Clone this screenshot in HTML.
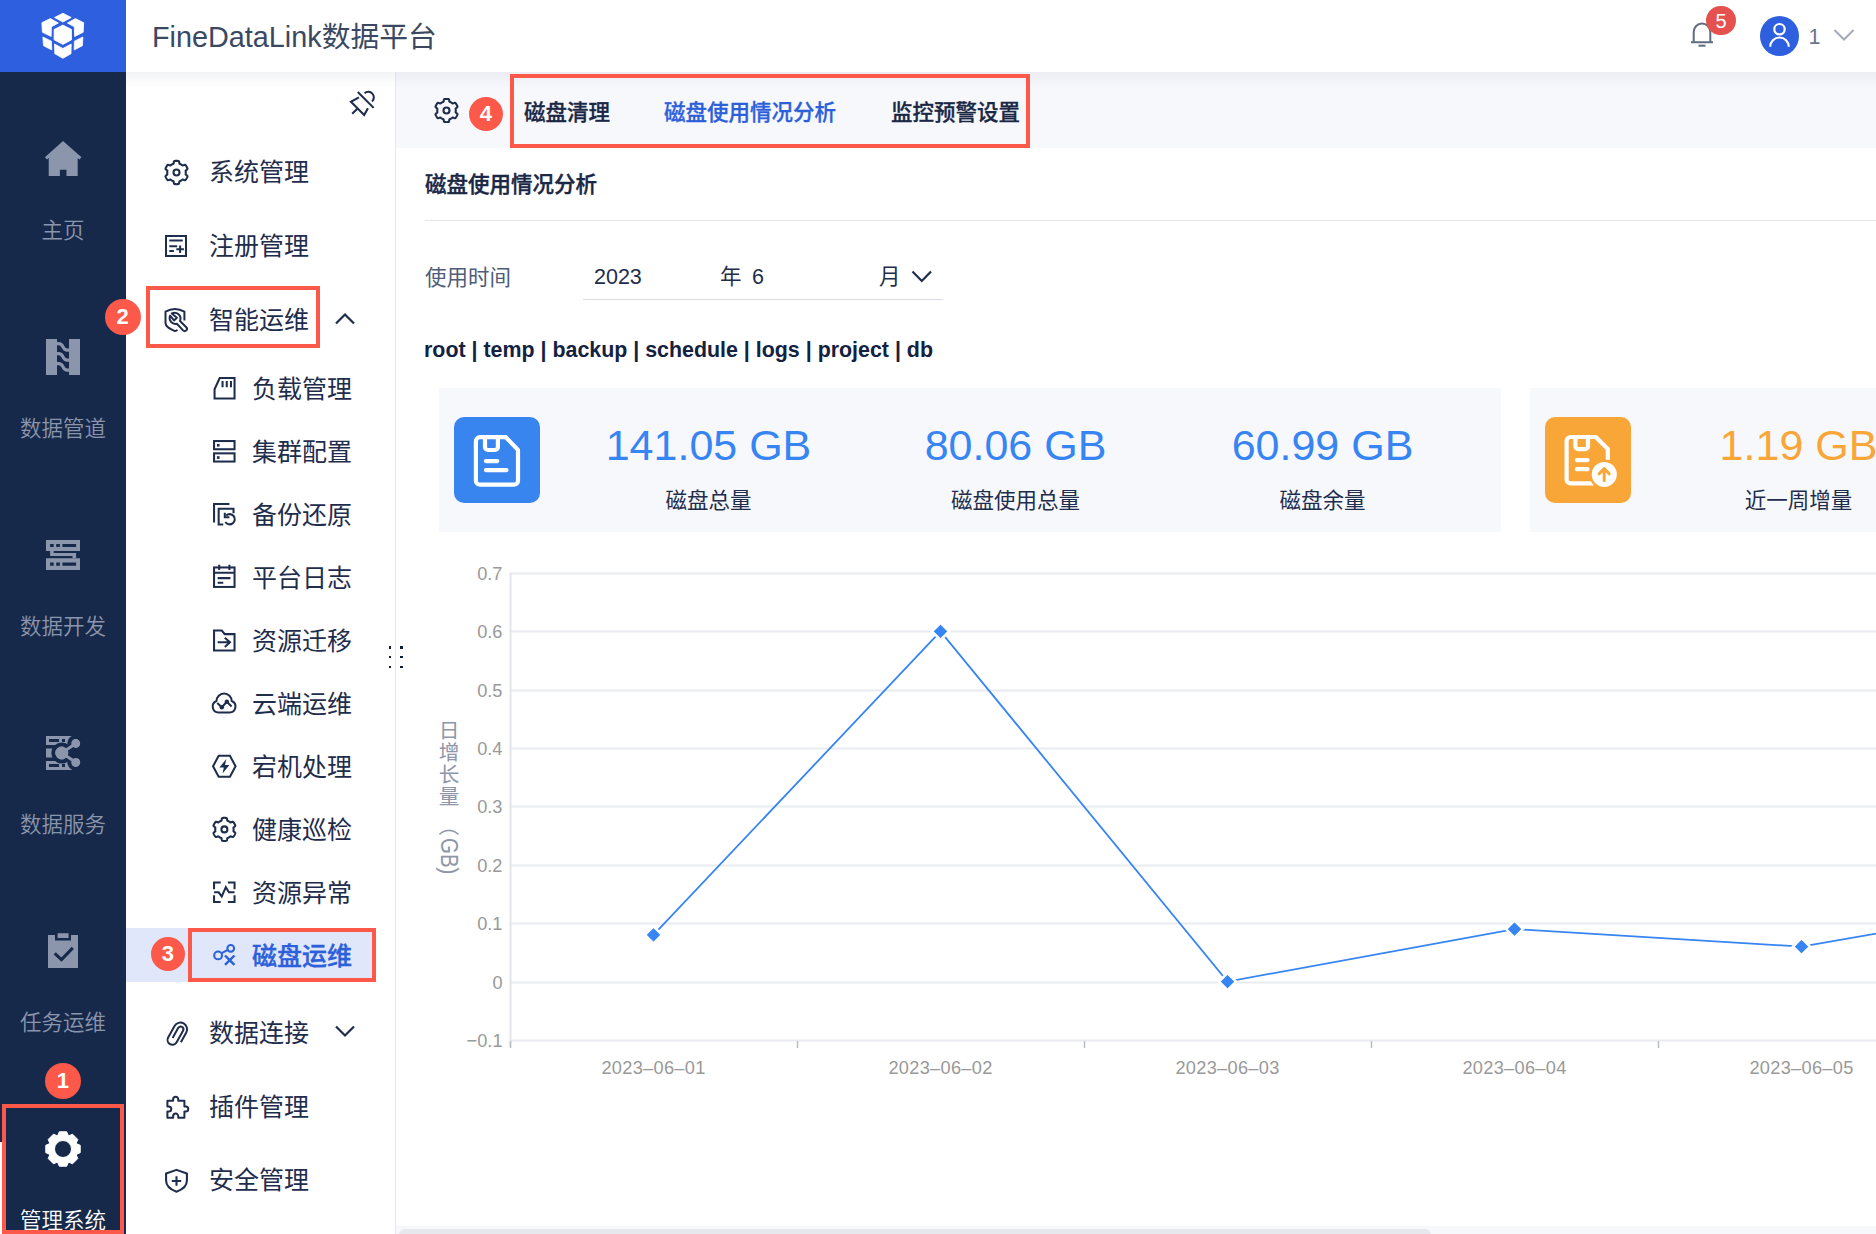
<!DOCTYPE html>
<html lang="zh-CN">
<head>
<meta charset="utf-8">
<title>FineDataLink数据平台</title>
<style>
*{box-sizing:border-box;margin:0;padding:0}
html,body{width:1876px;height:1234px;overflow:hidden;background:#fff}
body{position:relative;font-family:"Liberation Sans","Noto Sans CJK SC",sans-serif;color:#1f2d4d}
.abs{position:absolute}
#nav{left:0;top:0;width:126px;height:1234px;background:#16294b}
#logo{left:0;top:0;width:126px;height:72px;background:#2d5fde}
#header{left:126px;top:0;width:1750px;height:72px;background:#fff}
#title{left:152px;top:1px;height:72px;line-height:72px;font-size:28.8px;color:#3a4961;white-space:nowrap}
#hshadow{left:126px;top:72px;width:1750px;height:16px;background:linear-gradient(to bottom,rgba(30,45,80,.055),rgba(30,45,80,0))}
#side{left:126px;top:72px;width:270px;height:1162px;background:#fff;border-right:1px solid #e6e8ef}
#tabbar{left:396px;top:72px;width:1480px;height:76px;background:#f7f8fc}
.navlab{left:0;width:126px;text-align:center;font-size:21.5px;font-weight:350;color:#8f98ad;height:30px;line-height:30px;white-space:nowrap}
.m1{font-size:25px;height:36px;line-height:36px;white-space:nowrap;color:#1f2d4d}
.tab{font-size:21.5px;line-height:36px;font-weight:500;color:#1a2745;white-space:nowrap;-webkit-text-stroke:.3px currentColor}
.frm{top:259px;font-size:21.5px;line-height:36px;color:#1f2d4d;white-space:nowrap}
.val{top:420px;width:307px;text-align:center;font-size:43px;line-height:50px;color:#3685f2;white-space:nowrap}
.vlab{top:483px;width:307px;text-align:center;font-size:21.5px;line-height:36px;color:#1f2d4d;white-space:nowrap}
.redbox{border:4px solid #fc594a}
.badge{width:34px;height:34px;border-radius:50%;background:#fc594a;color:#fff;font-size:22px;font-weight:bold;text-align:center;line-height:34px}
</style>
</head>
<body>
<div id="nav" class="abs"></div>
<div id="logo" class="abs"></div>
<div id="header" class="abs"></div>
<div id="title" class="abs">FineDataLink数据平台</div>
<div id="side" class="abs"></div>
<div id="tabbar" class="abs"></div>
<div id="hshadow" class="abs"></div>
<svg class="abs" style="left:40px;top:12px" width="46" height="48" viewBox="0 0 46 48"><g fill="#fff" stroke="#fff" stroke-width="0.8" stroke-linejoin="round">
<path d="M22.9 1.2L31.2 5.5 22.9 10 14.6 5.5Z"/>
<path d="M10.3 6.6L18.4 11 11.4 14.8 11.2 24.5 2.4 20.2 1.9 10.7Z"/>
<path d="M35.4 6.6L43.7 10.7 43.2 20.2 34.6 24.5 34.4 14.8 27.4 11Z"/>
<path d="M22.9 13.1L31.5 17.5 31.5 27.8 22.9 32.4 14.1 27.8 14.1 17.5Z"/>
<path d="M2.9 25L11.4 29.2 11.8 37.9 3.5 33.7Z"/>
<path d="M42.9 25L42.4 33.7 34.2 37.9 34.4 29.2Z"/>
<path d="M14.5 32L22.9 36.5 31.2 32 31 41.7 22.9 46.3 14.8 41.7Z"/>
</g></svg>
<svg class="abs" style="left:44px;top:140px" width="38" height="37" viewBox="0 0 38 37"><path fill="#8b95ab" d="M19 1 L37.5 17.3 35.4 19.5 33.7 18 33.7 36 22.5 36 22.5 29.7 15.9 29.7 15.9 36 4.7 36 4.7 18 3 19.5 0.9 17.3Z"/></svg>
<svg class="abs" style="left:45px;top:338px" width="36" height="38" viewBox="0 0 36 38"><g fill="#8b95ab"><rect x="1" y="1" width="11" height="36"/><rect x="24" y="1" width="11" height="36"/></g><g fill="none" stroke="#8b95ab" stroke-width="3.2"><path d="M12 5.7H13.5C19.5 5.7 16.5 12.2 22.5 12.2H24"/><path d="M12 15.7H13.5C19.5 15.7 16.5 22.2 22.5 22.2H24"/><path d="M12 25.7H13.5C19.5 25.7 16.5 32.2 22.5 32.2H24"/></g></svg>
<svg class="abs" style="left:45px;top:539px" width="36" height="32" viewBox="0 0 36 32"><g fill="#8b95ab" fill-rule="evenodd"><path d="M1 1H35V12H1Z M5.1 5H8.7V8H5.1Z M11.2 5H14.9V8H11.2Z M17.4 5H31.1V8H17.4Z"/><path d="M1 19.2H35V31H1Z M5.1 23.4H8.7V26.7H5.1Z M11.2 23.4H14.9V26.7H11.2Z M17.4 23.4H31.1V26.7H17.4Z"/><path d="M5.1 12H8.7V14H31.1V19.2H27.5V17H5.1Z"/></g></svg>
<svg class="abs" style="left:45px;top:735px" width="38" height="36" viewBox="0 0 38 36"><g fill="#8b95ab" fill-rule="evenodd"><path d="M1 1H29V10H1Z M4 4H14V7H4Z M17 4H20V7H17Z"/><rect x="1" y="13.5" width="7" height="9"/><path d="M1 26H29V35H1Z M4 29H14V32H4Z M17 29H20V32H17Z"/></g>
<g stroke="#16294b" stroke-width="4" fill="#8b95ab"><circle cx="16.8" cy="18" r="8.5"/><circle cx="30.7" cy="8.5" r="6.4"/><circle cx="30.7" cy="27.3" r="6.4"/><path d="M16.8 18L30.7 8.5M16.8 18L30.7 27.3" stroke-width="7"/></g>
<g fill="#8b95ab" stroke="#8b95ab"><circle cx="16.8" cy="18" r="6.5" stroke="none"/><circle cx="30.7" cy="8.5" r="4.4" stroke="none"/><circle cx="30.7" cy="27.3" r="4.4" stroke="none"/><path d="M16.8 18L30.7 8.5M16.8 18L30.7 27.3" stroke-width="3"/></g></svg>
<svg class="abs" style="left:47px;top:932px" width="32" height="37" viewBox="0 0 32 37"><path fill="#8b95ab" fill-rule="evenodd" d="M1 3H8V8.5H24V3H31V36H1Z M10.6 1.3H21.6V5.9H10.6Z"/><path d="M7.7 21.4L14.5 27.6 25.8 15.9" fill="none" stroke="#16294b" stroke-width="3"/></svg>
<svg class="abs" style="left:43px;top:1129px" width="40" height="40" viewBox="0 0 40 40"><path fill="#fff" fill-rule="evenodd" d="M25.14 6.23 L23.7 2.79 L16.3 2.79 L14.86 6.23 L13.9 6.63 L10.45 5.21 L5.21 10.45 L6.63 13.9 L6.23 14.86 L2.79 16.3 L2.79 23.7 L6.23 25.14 L6.63 26.1 L5.21 29.55 L10.45 34.79 L13.9 33.37 L14.86 33.77 L16.3 37.21 L23.7 37.21 L25.14 33.77 L26.1 33.37 L29.55 34.79 L34.79 29.55 L33.37 26.1 L33.77 25.14 L37.21 23.7 L37.21 16.3 L33.77 14.86 L33.37 13.9 L34.79 10.45 L29.55 5.21 L26.1 6.63Z M28.5 20 A8.5 8.5 0 1 0 11.5 20 A8.5 8.5 0 1 0 28.5 20Z" stroke="#fff" stroke-width="1" stroke-linejoin="round"/></svg>
<div class="abs navlab" style="top:216px;color:#8b95ab">主页</div>
<div class="abs navlab" style="top:414px;color:#8b95ab">数据管道</div>
<div class="abs navlab" style="top:612px;color:#8b95ab">数据开发</div>
<div class="abs navlab" style="top:810px;color:#8b95ab">数据服务</div>
<div class="abs navlab" style="top:1008px;color:#8b95ab">任务运维</div>
<div class="abs navlab" style="top:1206px;color:#fff">管理系统</div>
<div class="abs" style="left:0;top:1142px;width:2px;height:92px;background:#fff"></div>
<div class="abs" style="left:126px;top:928px;width:250px;height:54px;background:#e0e7fa"></div>
<svg class="abs" style="left:163.7px;top:159.5px;color:#1f2d4d;" width="25" height="25" viewBox="0 0 24 24" overflow="visible"><path d="M20.9 12 L20.9 11.77 L20.89 11.53 L20.87 11.3 L20.85 11.07 L20.82 10.84 L20.79 10.61 L20.75 10.38 L20.84 10.12 L21.19 9.79 L21.71 9.4 L22.21 8.98 L22.52 8.58 L22.56 8.26 L22.46 7.99 L22.35 7.71 L22.23 7.44 L22.11 7.18 L21.98 6.92 L21.84 6.66 L21.7 6.4 L21.55 6.15 L21.39 5.9 L21.23 5.66 L21.06 5.42 L20.89 5.18 L20.7 4.95 L20.52 4.73 L20.22 4.6 L19.72 4.67 L19.11 4.89 L18.51 5.14 L18.05 5.28 L17.78 5.23 L17.6 5.08 L17.42 4.94 L17.23 4.8 L17.04 4.67 L16.85 4.54 L16.65 4.41 L16.45 4.29 L16.25 4.18 L16.04 4.07 L15.83 3.97 L15.62 3.87 L15.41 3.78 L15.19 3.69 L14.97 3.61 L14.79 3.41 L14.68 2.94 L14.6 2.29 L14.49 1.65 L14.3 1.18 L14.04 0.99 L13.75 0.94 L13.46 0.9 L13.17 0.86 L12.88 0.83 L12.59 0.82 L12.29 0.8 L12 0.8 L11.71 0.8 L11.41 0.82 L11.12 0.83 L10.83 0.86 L10.54 0.9 L10.25 0.94 L9.96 0.99 L9.7 1.18 L9.51 1.65 L9.4 2.29 L9.32 2.94 L9.21 3.41 L9.03 3.61 L8.81 3.69 L8.59 3.78 L8.38 3.87 L8.17 3.97 L7.96 4.07 L7.75 4.18 L7.55 4.29 L7.35 4.41 L7.15 4.54 L6.96 4.67 L6.77 4.8 L6.58 4.94 L6.4 5.08 L6.22 5.23 L5.95 5.28 L5.49 5.14 L4.89 4.89 L4.28 4.67 L3.78 4.6 L3.48 4.73 L3.3 4.95 L3.11 5.18 L2.94 5.42 L2.77 5.66 L2.61 5.9 L2.45 6.15 L2.3 6.4 L2.16 6.66 L2.02 6.92 L1.89 7.18 L1.77 7.44 L1.65 7.71 L1.54 7.99 L1.44 8.26 L1.48 8.58 L1.79 8.98 L2.29 9.4 L2.81 9.79 L3.16 10.12 L3.25 10.38 L3.21 10.61 L3.18 10.84 L3.15 11.07 L3.13 11.3 L3.11 11.53 L3.1 11.77 L3.1 12 L3.1 12.23 L3.11 12.47 L3.13 12.7 L3.15 12.93 L3.18 13.16 L3.21 13.39 L3.25 13.62 L3.16 13.88 L2.81 14.21 L2.29 14.6 L1.79 15.02 L1.48 15.42 L1.44 15.74 L1.54 16.01 L1.65 16.29 L1.77 16.56 L1.89 16.82 L2.02 17.08 L2.16 17.34 L2.3 17.6 L2.45 17.85 L2.61 18.1 L2.77 18.34 L2.94 18.58 L3.11 18.82 L3.3 19.05 L3.48 19.27 L3.78 19.4 L4.28 19.33 L4.89 19.11 L5.49 18.86 L5.95 18.72 L6.22 18.77 L6.4 18.92 L6.58 19.06 L6.77 19.2 L6.96 19.33 L7.15 19.46 L7.35 19.59 L7.55 19.71 L7.75 19.82 L7.96 19.93 L8.17 20.03 L8.38 20.13 L8.59 20.22 L8.81 20.31 L9.03 20.39 L9.21 20.59 L9.32 21.06 L9.4 21.71 L9.51 22.35 L9.7 22.82 L9.96 23.01 L10.25 23.06 L10.54 23.1 L10.83 23.14 L11.12 23.17 L11.41 23.18 L11.71 23.2 L12 23.2 L12.29 23.2 L12.59 23.18 L12.88 23.17 L13.17 23.14 L13.46 23.1 L13.75 23.06 L14.04 23.01 L14.3 22.82 L14.49 22.35 L14.6 21.71 L14.68 21.06 L14.79 20.59 L14.97 20.39 L15.19 20.31 L15.41 20.22 L15.62 20.13 L15.83 20.03 L16.04 19.93 L16.25 19.82 L16.45 19.71 L16.65 19.59 L16.85 19.46 L17.04 19.33 L17.23 19.2 L17.42 19.06 L17.6 18.92 L17.78 18.77 L18.05 18.72 L18.51 18.86 L19.11 19.11 L19.72 19.33 L20.22 19.4 L20.52 19.27 L20.7 19.05 L20.89 18.82 L21.06 18.58 L21.23 18.34 L21.39 18.1 L21.55 17.85 L21.7 17.6 L21.84 17.34 L21.98 17.08 L22.11 16.82 L22.23 16.56 L22.35 16.29 L22.46 16.01 L22.56 15.74 L22.52 15.42 L22.21 15.02 L21.71 14.6 L21.19 14.21 L20.84 13.88 L20.75 13.62 L20.79 13.39 L20.82 13.16 L20.85 12.93 L20.87 12.7 L20.89 12.47 L20.9 12.23Z" fill="none" stroke="currentColor" stroke-width="2" stroke-linejoin="round"/><circle cx="12" cy="12" r="2.9" fill="none" stroke="currentColor" stroke-width="2"/></svg>
<div class="abs m1" style="left:209px;top:154px">系统管理</div>
<svg class="abs" style="left:164.2px;top:234px;color:#1f2d4d;" width="24" height="24" viewBox="0 0 24 24" overflow="visible"><rect x="2" y="2" width="20" height="20" fill="none" stroke="currentColor" stroke-width="2"/><path d="M5.3 6.6H18.8M5.3 12.3H13.2M5.3 16.9H9.9M12.3 15.2H19.9M16.1 11.4V19" fill="none" stroke="currentColor" stroke-width="2"/></svg>
<div class="abs m1" style="left:209px;top:228px">注册管理</div>
<svg class="abs" style="left:164.2px;top:308px;color:#1f2d4d;" width="24" height="24" viewBox="0 0 24 24" overflow="visible"><path d="M20.4 12.6V3.6Q10.9 -1.7 1.5 3.6V15C1.5 19 6 21 10.9 23.1Q12.6 22.9 13.3 21.6" fill="none" stroke="currentColor" stroke-width="2" stroke-linejoin="round"/><path d="M7.8 5.5A5.9 5.9 0 0 1 16 13L22.3 19.2A2.25 2.25 0 0 1 19.1 22.4L12.9 15.7A5.9 5.9 0 0 1 6.1 7.7L10 12.4 12.9 9.7Z" fill="none" stroke="currentColor" stroke-width="2" stroke-linejoin="round"/></svg>
<div class="abs m1" style="left:209px;top:302px">智能运维</div>
<svg class="abs" style="left:212.3px;top:376.2px;color:#1f2d4d;" width="24.6" height="24.6" viewBox="0 0 24 24" overflow="visible"><path d="M7.5 2H22V22H2.5V13Z" fill="none" stroke="currentColor" stroke-width="2" stroke-linejoin="miter"/><path d="M10.3 5V11M14.4 5V11M18.5 5V11" fill="none" stroke="currentColor" stroke-width="2"/></svg>
<div class="abs m1" style="left:252px;top:371px;color:#1f2d4d;">负载管理</div>
<svg class="abs" style="left:212.3px;top:439.2px;color:#1f2d4d;" width="24.6" height="24.6" viewBox="0 0 24 24" overflow="visible"><rect x="2" y="2" width="20" height="8" fill="none" stroke="currentColor" stroke-width="2"/><rect x="2" y="14" width="20" height="8" fill="none" stroke="currentColor" stroke-width="2"/><rect x="4.8" y="4.8" width="2.6" height="2.6" fill="currentColor"/><rect x="4.8" y="16.8" width="2.6" height="2.6" fill="currentColor"/></svg>
<div class="abs m1" style="left:252px;top:434px;color:#1f2d4d;">集群配置</div>
<svg class="abs" style="left:212.3px;top:502.2px;color:#1f2d4d;" width="24.6" height="24.6" viewBox="0 0 24 24" overflow="visible"><path d="M2 20V2H17" fill="none" stroke="currentColor" stroke-width="2"/><path d="M11 22H6.5V6.5H21V11" fill="none" stroke="currentColor" stroke-width="2"/><path d="M13.8 13.2A5 5 0 1 1 13 19.5" fill="none" stroke="currentColor" stroke-width="2"/><path d="M12.5 10.5V14.8H17" fill="none" stroke="currentColor" stroke-width="2"/></svg>
<div class="abs m1" style="left:252px;top:497px;color:#1f2d4d;">备份还原</div>
<svg class="abs" style="left:212.3px;top:565.2px;color:#1f2d4d;" width="24.6" height="24.6" viewBox="0 0 24 24" overflow="visible"><rect x="2" y="2.4" width="20" height="19" fill="none" stroke="currentColor" stroke-width="2"/><path d="M2 7.6H22M7 -0.2V5M17 -0.2V5M5.5 12.8H18M5.5 17.3H11" fill="none" stroke="currentColor" stroke-width="2"/></svg>
<div class="abs m1" style="left:252px;top:560px;color:#1f2d4d;">平台日志</div>
<svg class="abs" style="left:212.3px;top:628.2px;color:#1f2d4d;" width="24.6" height="24.6" viewBox="0 0 24 24" overflow="visible"><path d="M2 2.5H9.5L12.5 6H22V22H2Z" fill="none" stroke="currentColor" stroke-width="2" stroke-linejoin="miter"/><path d="M5.5 14H17M12.5 9.5L17.5 14L12.5 18.5" fill="none" stroke="currentColor" stroke-width="2"/></svg>
<div class="abs m1" style="left:252px;top:623px;color:#1f2d4d;">资源迁移</div>
<svg class="abs" style="left:212.3px;top:691.2px;color:#1f2d4d;" width="24.6" height="24.6" viewBox="0 0 24 24" overflow="visible"><path d="M6.4 21H17.2A5.8 5.8 0 0 0 19.2 9.8A7.4 7.4 0 0 0 4.4 9.8A5.8 5.8 0 0 0 6.4 21Z" fill="none" stroke="currentColor" stroke-width="2" stroke-linejoin="round"/><path d="M5.1 11.6L9.6 15.9 14.5 10.5 19.1 15.2" fill="none" stroke="currentColor" stroke-width="2"/><circle cx="9.6" cy="15.9" r="2.2" fill="currentColor"/><circle cx="14.5" cy="10.5" r="2.2" fill="currentColor"/></svg>
<div class="abs m1" style="left:252px;top:686px;color:#1f2d4d;">云端运维</div>
<svg class="abs" style="left:212.3px;top:754.2px;color:#1f2d4d;" width="24.6" height="24.6" viewBox="0 0 24 24" overflow="visible"><path d="M6.5 1.8H17.5L23 12 17.5 22.2H6.5L1 12Z" fill="none" stroke="currentColor" stroke-width="2" stroke-linejoin="miter"/><path d="M13.9 5L7.2 13.2H11.5L10.3 19L17 10.8H12.7Z" fill="currentColor"/></svg>
<div class="abs m1" style="left:252px;top:749px;color:#1f2d4d;">宕机处理</div>
<svg class="abs" style="left:212.2px;top:817.1px;color:#1f2d4d;" width="24.8" height="24.8" viewBox="0 0 24 24" overflow="visible"><path d="M20.9 12 L20.9 11.77 L20.89 11.53 L20.87 11.3 L20.85 11.07 L20.82 10.84 L20.79 10.61 L20.75 10.38 L20.84 10.12 L21.19 9.79 L21.71 9.4 L22.21 8.98 L22.52 8.58 L22.56 8.26 L22.46 7.99 L22.35 7.71 L22.23 7.44 L22.11 7.18 L21.98 6.92 L21.84 6.66 L21.7 6.4 L21.55 6.15 L21.39 5.9 L21.23 5.66 L21.06 5.42 L20.89 5.18 L20.7 4.95 L20.52 4.73 L20.22 4.6 L19.72 4.67 L19.11 4.89 L18.51 5.14 L18.05 5.28 L17.78 5.23 L17.6 5.08 L17.42 4.94 L17.23 4.8 L17.04 4.67 L16.85 4.54 L16.65 4.41 L16.45 4.29 L16.25 4.18 L16.04 4.07 L15.83 3.97 L15.62 3.87 L15.41 3.78 L15.19 3.69 L14.97 3.61 L14.79 3.41 L14.68 2.94 L14.6 2.29 L14.49 1.65 L14.3 1.18 L14.04 0.99 L13.75 0.94 L13.46 0.9 L13.17 0.86 L12.88 0.83 L12.59 0.82 L12.29 0.8 L12 0.8 L11.71 0.8 L11.41 0.82 L11.12 0.83 L10.83 0.86 L10.54 0.9 L10.25 0.94 L9.96 0.99 L9.7 1.18 L9.51 1.65 L9.4 2.29 L9.32 2.94 L9.21 3.41 L9.03 3.61 L8.81 3.69 L8.59 3.78 L8.38 3.87 L8.17 3.97 L7.96 4.07 L7.75 4.18 L7.55 4.29 L7.35 4.41 L7.15 4.54 L6.96 4.67 L6.77 4.8 L6.58 4.94 L6.4 5.08 L6.22 5.23 L5.95 5.28 L5.49 5.14 L4.89 4.89 L4.28 4.67 L3.78 4.6 L3.48 4.73 L3.3 4.95 L3.11 5.18 L2.94 5.42 L2.77 5.66 L2.61 5.9 L2.45 6.15 L2.3 6.4 L2.16 6.66 L2.02 6.92 L1.89 7.18 L1.77 7.44 L1.65 7.71 L1.54 7.99 L1.44 8.26 L1.48 8.58 L1.79 8.98 L2.29 9.4 L2.81 9.79 L3.16 10.12 L3.25 10.38 L3.21 10.61 L3.18 10.84 L3.15 11.07 L3.13 11.3 L3.11 11.53 L3.1 11.77 L3.1 12 L3.1 12.23 L3.11 12.47 L3.13 12.7 L3.15 12.93 L3.18 13.16 L3.21 13.39 L3.25 13.62 L3.16 13.88 L2.81 14.21 L2.29 14.6 L1.79 15.02 L1.48 15.42 L1.44 15.74 L1.54 16.01 L1.65 16.29 L1.77 16.56 L1.89 16.82 L2.02 17.08 L2.16 17.34 L2.3 17.6 L2.45 17.85 L2.61 18.1 L2.77 18.34 L2.94 18.58 L3.11 18.82 L3.3 19.05 L3.48 19.27 L3.78 19.4 L4.28 19.33 L4.89 19.11 L5.49 18.86 L5.95 18.72 L6.22 18.77 L6.4 18.92 L6.58 19.06 L6.77 19.2 L6.96 19.33 L7.15 19.46 L7.35 19.59 L7.55 19.71 L7.75 19.82 L7.96 19.93 L8.17 20.03 L8.38 20.13 L8.59 20.22 L8.81 20.31 L9.03 20.39 L9.21 20.59 L9.32 21.06 L9.4 21.71 L9.51 22.35 L9.7 22.82 L9.96 23.01 L10.25 23.06 L10.54 23.1 L10.83 23.14 L11.12 23.17 L11.41 23.18 L11.71 23.2 L12 23.2 L12.29 23.2 L12.59 23.18 L12.88 23.17 L13.17 23.14 L13.46 23.1 L13.75 23.06 L14.04 23.01 L14.3 22.82 L14.49 22.35 L14.6 21.71 L14.68 21.06 L14.79 20.59 L14.97 20.39 L15.19 20.31 L15.41 20.22 L15.62 20.13 L15.83 20.03 L16.04 19.93 L16.25 19.82 L16.45 19.71 L16.65 19.59 L16.85 19.46 L17.04 19.33 L17.23 19.2 L17.42 19.06 L17.6 18.92 L17.78 18.77 L18.05 18.72 L18.51 18.86 L19.11 19.11 L19.72 19.33 L20.22 19.4 L20.52 19.27 L20.7 19.05 L20.89 18.82 L21.06 18.58 L21.23 18.34 L21.39 18.1 L21.55 17.85 L21.7 17.6 L21.84 17.34 L21.98 17.08 L22.11 16.82 L22.23 16.56 L22.35 16.29 L22.46 16.01 L22.56 15.74 L22.52 15.42 L22.21 15.02 L21.71 14.6 L21.19 14.21 L20.84 13.88 L20.75 13.62 L20.79 13.39 L20.82 13.16 L20.85 12.93 L20.87 12.7 L20.89 12.47 L20.9 12.23Z" fill="none" stroke="currentColor" stroke-width="2" stroke-linejoin="round"/><circle cx="12" cy="12" r="2.9" fill="none" stroke="currentColor" stroke-width="2"/></svg>
<div class="abs m1" style="left:252px;top:812px;color:#1f2d4d;">健康巡检</div>
<svg class="abs" style="left:212.3px;top:880.2px;color:#1f2d4d;" width="24.6" height="24.6" viewBox="0 0 24 24" overflow="visible"><path d="M2 9V2.5H8.5M15.5 2.5H22V9M22 15V21.5H15.5M8.5 21.5H2V15" fill="none" stroke="currentColor" stroke-width="2"/><path d="M2 12H6.5L9.5 16 13.5 7 16.5 12H22" fill="none" stroke="currentColor" stroke-width="2" stroke-linejoin="miter"/></svg>
<div class="abs m1" style="left:252px;top:875px;color:#1f2d4d;">资源异常</div>
<svg class="abs" style="left:212.3px;top:943.2px;color:#2c60db;" width="24.6" height="24.6" viewBox="0 0 24 24" overflow="visible"><circle cx="5.95" cy="12.1" r="3.8" fill="none" stroke="currentColor" stroke-width="2"/><circle cx="18.3" cy="5.2" r="3.3" fill="none" stroke="currentColor" stroke-width="2"/><path d="M9.4 9.9L15 7" fill="none" stroke="currentColor" stroke-width="2"/><path d="M12.7 12.2L21.9 21.4M21.9 12.2L12.7 21.4" fill="none" stroke="currentColor" stroke-width="2.4"/></svg>
<div class="abs m1" style="left:252px;top:938px;color:#2c60db;font-weight:500;-webkit-text-stroke:.35px #2c60db;">磁盘运维</div>
<svg class="abs" style="left:164.5px;top:1021px;color:#1f2d4d;" width="24" height="24" viewBox="0 0 24 24" overflow="visible"><g transform="translate(12.7 13.2) rotate(29)"><path d="M-2.6 5.8V-5.6A2.8 2.8 0 0 1 3 -5.6V7.6A4.85 4.85 0 0 1 -6.7 7.6V-5.6A6.7 6.7 0 0 1 6.7 -5.6V5.5" fill="none" stroke="currentColor" stroke-width="2"/></g></svg>
<div class="abs m1" style="left:209px;top:1015px">数据连接</div>
<svg class="abs" style="left:164.5px;top:1095px;color:#1f2d4d;" width="24" height="24" viewBox="0 0 24 24" overflow="visible"><path d="M2.4 5.7H8.15V4.3A2.55 2.55 0 0 1 13.25 4.3V5.7H19.4V11.45H20.75A2.55 2.55 0 0 1 20.75 16.55H19.4V22.8H13.25V21.15A2.55 2.55 0 0 0 8.15 21.15V22.8H2.4V16.55H3.75A2.55 2.55 0 0 0 3.75 11.45H2.4Z" fill="none" stroke="currentColor" stroke-width="2" stroke-linejoin="round"/></svg>
<div class="abs m1" style="left:209px;top:1089px">插件管理</div>
<svg class="abs" style="left:164px;top:1167.5px;color:#1f2d4d;" width="25" height="25" viewBox="0 0 24 24" overflow="visible"><path d="M12 1.8L22 5.2V12c0 5.2-4 8.6-10 10.8C6 20.6 2 17.2 2 12V5.2Z" fill="none" stroke="currentColor" stroke-width="2" stroke-linejoin="round"/><path d="M7.5 12.5H16.5M12 8V17" fill="none" stroke="currentColor" stroke-width="2"/></svg>
<div class="abs m1" style="left:209px;top:1162px">安全管理</div>
<svg class="abs" style="left:333px;top:310px" width="24" height="18" viewBox="0 0 24 18"><path d="M3 13.5L12 4.5 21 13.5" fill="none" stroke="#1f2d4d" stroke-width="2.2"/></svg>
<svg class="abs" style="left:333px;top:1022px" width="24" height="18" viewBox="0 0 24 18"><path d="M3 4.5L12 13.5 21 4.5" fill="none" stroke="#1f2d4d" stroke-width="2.2"/></svg>
<svg class="abs" style="left:350.1px;top:90.8px;color:#1f2d4d;" width="25" height="25" viewBox="0 0 24 24" overflow="visible"><path d="M7.5 1L22.7 16.2M14 2.2A5.3 5.3 0 0 1 21.2 10M8.6 6.1L0.9 10.4 13.6 23 17.2 16.5M6.8 17.2L2.1 21.9" fill="none" stroke="currentColor" stroke-width="2"/></svg>
<div class="abs" style="left:388.7px;top:646px;width:2.6px;height:2.6px;background:#0e1b3a"></div>
<div class="abs" style="left:400.4px;top:646px;width:2.6px;height:2.6px;background:#0e1b3a"></div>
<div class="abs" style="left:388.7px;top:655.9px;width:2.6px;height:2.6px;background:#0e1b3a"></div>
<div class="abs" style="left:400.4px;top:655.9px;width:2.6px;height:2.6px;background:#0e1b3a"></div>
<div class="abs" style="left:388.7px;top:665.8px;width:2.6px;height:2.6px;background:#0e1b3a"></div>
<div class="abs" style="left:400.4px;top:665.8px;width:2.6px;height:2.6px;background:#0e1b3a"></div>
<!-- header right -->
<svg class="abs" style="left:1688px;top:18.5px" width="28" height="30" viewBox="0 0 28 30"><path d="M3 23.2H25M5.7 23.2V12.8a8.3 8.3 0 0 1 16.6 0V23.2" fill="none" stroke="#5f6b7f" stroke-width="2"/><path d="M10.5 26.7H17.5" stroke="#5f6b7f" stroke-width="2"/></svg>
<div class="abs" style="left:1706px;top:6px;width:30px;height:29px;border-radius:15px;background:#e5514f;color:#fff;font-size:20px;line-height:30px;text-align:center">5</div>
<div class="abs" style="left:1760px;top:16px;width:39px;height:40px;border-radius:50%;background:#2d5fde"></div>
<svg class="abs" style="left:1760px;top:16px" width="39" height="39" viewBox="0 0 39 39"><circle cx="19.5" cy="13.2" r="5.2" fill="none" stroke="#fff" stroke-width="2.2"/><path d="M10.2 30.8a9.3 9.3 0 0 1 18.6 0" fill="none" stroke="#fff" stroke-width="2.2"/></svg>
<div class="abs" style="left:1808.5px;top:21.5px;font-size:21.5px;line-height:30px;color:#6b7689">1</div>
<svg class="abs" style="left:1832px;top:27px" width="24" height="16" viewBox="0 0 24 16"><path d="M2.5 3L12 12.5 21.5 3" fill="none" stroke="#a3abb8" stroke-width="2"/></svg>
<!-- tab bar -->
<svg class="abs" style="left:433.5px;top:97.5px;color:#1f2d4d" width="25" height="25" viewBox="0 0 24 24"><path d="M20.9 12 L20.9 11.77 L20.89 11.53 L20.87 11.3 L20.85 11.07 L20.82 10.84 L20.79 10.61 L20.75 10.38 L20.84 10.12 L21.19 9.79 L21.71 9.4 L22.21 8.98 L22.52 8.58 L22.56 8.26 L22.46 7.99 L22.35 7.71 L22.23 7.44 L22.11 7.18 L21.98 6.92 L21.84 6.66 L21.7 6.4 L21.55 6.15 L21.39 5.9 L21.23 5.66 L21.06 5.42 L20.89 5.18 L20.7 4.95 L20.52 4.73 L20.22 4.6 L19.72 4.67 L19.11 4.89 L18.51 5.14 L18.05 5.28 L17.78 5.23 L17.6 5.08 L17.42 4.94 L17.23 4.8 L17.04 4.67 L16.85 4.54 L16.65 4.41 L16.45 4.29 L16.25 4.18 L16.04 4.07 L15.83 3.97 L15.62 3.87 L15.41 3.78 L15.19 3.69 L14.97 3.61 L14.79 3.41 L14.68 2.94 L14.6 2.29 L14.49 1.65 L14.3 1.18 L14.04 0.99 L13.75 0.94 L13.46 0.9 L13.17 0.86 L12.88 0.83 L12.59 0.82 L12.29 0.8 L12 0.8 L11.71 0.8 L11.41 0.82 L11.12 0.83 L10.83 0.86 L10.54 0.9 L10.25 0.94 L9.96 0.99 L9.7 1.18 L9.51 1.65 L9.4 2.29 L9.32 2.94 L9.21 3.41 L9.03 3.61 L8.81 3.69 L8.59 3.78 L8.38 3.87 L8.17 3.97 L7.96 4.07 L7.75 4.18 L7.55 4.29 L7.35 4.41 L7.15 4.54 L6.96 4.67 L6.77 4.8 L6.58 4.94 L6.4 5.08 L6.22 5.23 L5.95 5.28 L5.49 5.14 L4.89 4.89 L4.28 4.67 L3.78 4.6 L3.48 4.73 L3.3 4.95 L3.11 5.18 L2.94 5.42 L2.77 5.66 L2.61 5.9 L2.45 6.15 L2.3 6.4 L2.16 6.66 L2.02 6.92 L1.89 7.18 L1.77 7.44 L1.65 7.71 L1.54 7.99 L1.44 8.26 L1.48 8.58 L1.79 8.98 L2.29 9.4 L2.81 9.79 L3.16 10.12 L3.25 10.38 L3.21 10.61 L3.18 10.84 L3.15 11.07 L3.13 11.3 L3.11 11.53 L3.1 11.77 L3.1 12 L3.1 12.23 L3.11 12.47 L3.13 12.7 L3.15 12.93 L3.18 13.16 L3.21 13.39 L3.25 13.62 L3.16 13.88 L2.81 14.21 L2.29 14.6 L1.79 15.02 L1.48 15.42 L1.44 15.74 L1.54 16.01 L1.65 16.29 L1.77 16.56 L1.89 16.82 L2.02 17.08 L2.16 17.34 L2.3 17.6 L2.45 17.85 L2.61 18.1 L2.77 18.34 L2.94 18.58 L3.11 18.82 L3.3 19.05 L3.48 19.27 L3.78 19.4 L4.28 19.33 L4.89 19.11 L5.49 18.86 L5.95 18.72 L6.22 18.77 L6.4 18.92 L6.58 19.06 L6.77 19.2 L6.96 19.33 L7.15 19.46 L7.35 19.59 L7.55 19.71 L7.75 19.82 L7.96 19.93 L8.17 20.03 L8.38 20.13 L8.59 20.22 L8.81 20.31 L9.03 20.39 L9.21 20.59 L9.32 21.06 L9.4 21.71 L9.51 22.35 L9.7 22.82 L9.96 23.01 L10.25 23.06 L10.54 23.1 L10.83 23.14 L11.12 23.17 L11.41 23.18 L11.71 23.2 L12 23.2 L12.29 23.2 L12.59 23.18 L12.88 23.17 L13.17 23.14 L13.46 23.1 L13.75 23.06 L14.04 23.01 L14.3 22.82 L14.49 22.35 L14.6 21.71 L14.68 21.06 L14.79 20.59 L14.97 20.39 L15.19 20.31 L15.41 20.22 L15.62 20.13 L15.83 20.03 L16.04 19.93 L16.25 19.82 L16.45 19.71 L16.65 19.59 L16.85 19.46 L17.04 19.33 L17.23 19.2 L17.42 19.06 L17.6 18.92 L17.78 18.77 L18.05 18.72 L18.51 18.86 L19.11 19.11 L19.72 19.33 L20.22 19.4 L20.52 19.27 L20.7 19.05 L20.89 18.82 L21.06 18.58 L21.23 18.34 L21.39 18.1 L21.55 17.85 L21.7 17.6 L21.84 17.34 L21.98 17.08 L22.11 16.82 L22.23 16.56 L22.35 16.29 L22.46 16.01 L22.56 15.74 L22.52 15.42 L22.21 15.02 L21.71 14.6 L21.19 14.21 L20.84 13.88 L20.75 13.62 L20.79 13.39 L20.82 13.16 L20.85 12.93 L20.87 12.7 L20.89 12.47 L20.9 12.23Z" fill="none" stroke="currentColor" stroke-width="2" stroke-linejoin="round"/><circle cx="12" cy="12" r="2.9" fill="none" stroke="currentColor" stroke-width="2"/></svg>
<div class="abs tab" style="left:524px;top:95px">磁盘清理</div>
<div class="abs tab" style="left:664px;top:95px;color:#2c60db">磁盘使用情况分析</div>
<div class="abs tab" style="left:891px;top:95px">监控预警设置</div>
<!-- title -->
<div class="abs" style="left:425px;top:167px;font-size:21.5px;line-height:36px;font-weight:500;-webkit-text-stroke:.4px #1a2745;color:#1a2745;white-space:nowrap">磁盘使用情况分析</div>
<div class="abs" style="left:425px;top:220px;width:1451px;height:1px;background:#e2e5ec"></div>
<!-- form row -->
<div class="abs" style="left:425px;top:260px;font-size:21.5px;line-height:36px;color:#4f5d78;white-space:nowrap">使用时间</div>
<div class="abs frm" style="left:594px">2023</div>
<div class="abs frm" style="left:720px">年</div>
<div class="abs frm" style="left:752px">6</div>
<div class="abs frm" style="left:879px">月</div>
<svg class="abs" style="left:910px;top:268px" width="24" height="18" viewBox="0 0 24 18"><path d="M2.5 3.5L11.8 13 21 3.5" fill="none" stroke="#1f2d4d" stroke-width="2.2"/></svg>
<div class="abs" style="left:583px;top:299px;width:360px;height:1px;background:#d9dce4"></div>
<div class="abs" id="paths" style="left:424px;top:332px;font-size:21.4px;line-height:36px;font-weight:bold;color:#14223f;white-space:nowrap">root | temp | backup | schedule | logs | project | db</div>
<!-- cards -->
<div class="abs" style="left:439px;top:388px;width:1062px;height:144px;background:#f7f8fc"></div>
<div class="abs" style="left:1530px;top:388px;width:346px;height:144px;background:#f7f8fc"></div>
<div class="abs" style="left:454px;top:417px;width:86px;height:86px;border-radius:10px;background:#3885f0"></div>
<svg class="abs" style="left:454px;top:417px" width="86" height="86" viewBox="0 0 86 86"><g fill="none" stroke="#fff" stroke-width="4.2" stroke-linejoin="round" stroke-linecap="round"><path d="M26 20.2H51.8L64 32.9V63.7a4 4 0 0 1-4 4H25.9a4 4 0 0 1-4-4V24.2a4 4 0 0 1 4-4Z"/><path d="M31 20.2V30a3 3 0 0 0 3 3H40.9a3 3 0 0 0 3-3V20.2"/><path d="M31.9 44.1H43.3M31.9 53.1H52.5"/></g></svg>
<div class="abs" style="left:1545px;top:417px;width:86px;height:86px;border-radius:10px;background:#f9a638"></div>
<svg class="abs" style="left:1545px;top:417px" width="86" height="86" viewBox="0 0 86 86"><g fill="none" stroke="#fff" stroke-width="4.2" stroke-linejoin="round" stroke-linecap="round"><path d="M62.8 42V32L50.8 20H25.6a4 4 0 0 0-4 4V62.4a4 4 0 0 0 4 4H48"/><path d="M30.4 20V29.2a3 3 0 0 0 3 3H40a3 3 0 0 0 3-3V20"/><path d="M31.9 43.1H42.5M31.9 52.2H42.5"/></g><circle cx="59.3" cy="57.4" r="15" fill="#f9a638"/><circle cx="59.3" cy="57.4" r="12.5" fill="#fff"/><path d="M59.2 63.4V52M54.2 56.8L59.2 51.6 64.2 56.8" fill="none" stroke="#f9a638" stroke-width="3" stroke-linecap="round" stroke-linejoin="round"/></svg>
<div class="abs val" style="left:555px">141.05 GB</div><div class="abs vlab" style="left:555px">磁盘总量</div>
<div class="abs val" style="left:862px">80.06 GB</div><div class="abs vlab" style="left:862px">磁盘使用总量</div>
<div class="abs val" style="left:1169px">60.99 GB</div><div class="abs vlab" style="left:1169px">磁盘余量</div>
<div class="abs val" style="left:1645px;color:#f9a638">1.19 GB</div><div class="abs vlab" style="left:1645px">近一周增量</div>
<!-- bottom scrollbar -->
<div class="abs" style="left:396px;top:1226px;width:1480px;height:8px;background:#f7f8fc"></div>
<div class="abs" style="left:399px;top:1229px;width:1032px;height:12px;border-radius:6px;background:#e6e8ee"></div>

<svg class="abs" style="left:396px;top:540px" width="1480" height="560" viewBox="396 540 1480 560" font-family="Liberation Sans, Noto Sans CJK SC, sans-serif">
<path d="M510 573.5H1876" stroke="#e9ebf0" stroke-width="2"/>
<text x="502.5" y="579.5" text-anchor="end" font-size="18.2" fill="#999">0.7</text>
<path d="M510 631.5H1876" stroke="#e9ebf0" stroke-width="2"/>
<text x="502.5" y="637.5" text-anchor="end" font-size="18.2" fill="#999">0.6</text>
<path d="M510 690.5H1876" stroke="#e9ebf0" stroke-width="2"/>
<text x="502.5" y="696.5" text-anchor="end" font-size="18.2" fill="#999">0.5</text>
<path d="M510 748.5H1876" stroke="#e9ebf0" stroke-width="2"/>
<text x="502.5" y="754.5" text-anchor="end" font-size="18.2" fill="#999">0.4</text>
<path d="M510 806.5H1876" stroke="#e9ebf0" stroke-width="2"/>
<text x="502.5" y="812.5" text-anchor="end" font-size="18.2" fill="#999">0.3</text>
<path d="M510 865.5H1876" stroke="#e9ebf0" stroke-width="2"/>
<text x="502.5" y="871.5" text-anchor="end" font-size="18.2" fill="#999">0.2</text>
<path d="M510 923.5H1876" stroke="#e9ebf0" stroke-width="2"/>
<text x="502.5" y="929.5" text-anchor="end" font-size="18.2" fill="#999">0.1</text>
<path d="M510 982.5H1876" stroke="#e9ebf0" stroke-width="2"/>
<text x="502.5" y="988.5" text-anchor="end" font-size="18.2" fill="#999">0</text>
<path d="M510 1040.5H1876" stroke="#e9ebf0" stroke-width="2"/>
<text x="502.5" y="1046.5" text-anchor="end" font-size="18.2" fill="#999">−0.1</text>
<path d="M510.5 573V1047" stroke="#e3e5ea" stroke-width="2"/>
<path d="M510.5 1041V1048" stroke="#b9bcc4" stroke-width="1.5"/>
<path d="M797.5 1041V1048" stroke="#b9bcc4" stroke-width="1.5"/>
<path d="M1084.5 1041V1048" stroke="#b9bcc4" stroke-width="1.5"/>
<path d="M1371.5 1041V1048" stroke="#b9bcc4" stroke-width="1.5"/>
<path d="M1658.5 1041V1048" stroke="#b9bcc4" stroke-width="1.5"/>
<text x="653.5" y="1073.5" text-anchor="middle" font-size="18.2" letter-spacing="0.3" fill="#999">2023–06–01</text>
<text x="940.5" y="1073.5" text-anchor="middle" font-size="18.2" letter-spacing="0.3" fill="#999">2023–06–02</text>
<text x="1227.5" y="1073.5" text-anchor="middle" font-size="18.2" letter-spacing="0.3" fill="#999">2023–06–03</text>
<text x="1514.5" y="1073.5" text-anchor="middle" font-size="18.2" letter-spacing="0.3" fill="#999">2023–06–04</text>
<text x="1801.5" y="1073.5" text-anchor="middle" font-size="18.2" letter-spacing="0.3" fill="#999">2023–06–05</text>
<polyline points="653.5,934.9 940.5,631.4 1227.5,981.6 1514.5,929.1 1801.5,946.6 2088.5,896.9" fill="none" stroke="#3685f2" stroke-width="1.8"/>
<path d="M653.5 926.4L662 934.9L653.5 943.4L645 934.9Z" fill="#3685f2" stroke="#fff" stroke-width="2.5"/>
<path d="M940.5 622.9L949 631.4L940.5 639.9L932 631.4Z" fill="#3685f2" stroke="#fff" stroke-width="2.5"/>
<path d="M1227.5 973.1L1236 981.6L1227.5 990.1L1219 981.6Z" fill="#3685f2" stroke="#fff" stroke-width="2.5"/>
<path d="M1514.5 920.6L1523 929.1L1514.5 937.6L1506 929.1Z" fill="#3685f2" stroke="#fff" stroke-width="2.5"/>
<path d="M1801.5 938.1L1810 946.6L1801.5 955.1L1793 946.6Z" fill="#3685f2" stroke="#fff" stroke-width="2.5"/>
<text x="449" y="738.2" text-anchor="middle" font-size="20.7" fill="#8e96a8"><tspan x="449" dy="0">日</tspan><tspan x="449" dy="21.8">增</tspan><tspan x="449" dy="21.8">长</tspan><tspan x="449" dy="21.8">量</tspan></text>
<text transform="translate(441.3,815.2) rotate(90)" font-size="20.7" fill="#8e96a8">（</text>
<text transform="translate(440.8,838) rotate(90) scale(0.87,1)" font-size="23.5" fill="#8e96a8">GB)</text>
</svg>
<div class="abs redbox" style="left:2px;top:1104px;width:122px;height:130px"></div>
<div class="abs badge" style="left:44.8px;top:1063.2px;width:36px;height:36px;line-height:36px">1</div>
<div class="abs redbox" style="left:146px;top:286px;width:174px;height:62px"></div>
<div class="abs badge" style="left:104.7px;top:299.2px;width:36px;height:36px;line-height:36px">2</div>
<div class="abs redbox" style="left:188px;top:928px;width:188px;height:54px"></div>
<div class="abs badge" style="left:150.8px;top:937px;width:34px;height:34px;line-height:34px">3</div>
<div class="abs redbox" style="left:510px;top:74px;width:520px;height:74px"></div>
<div class="abs badge" style="left:468.8px;top:97px;width:34px;height:34px;line-height:34px">4</div>
</body>
</html>
